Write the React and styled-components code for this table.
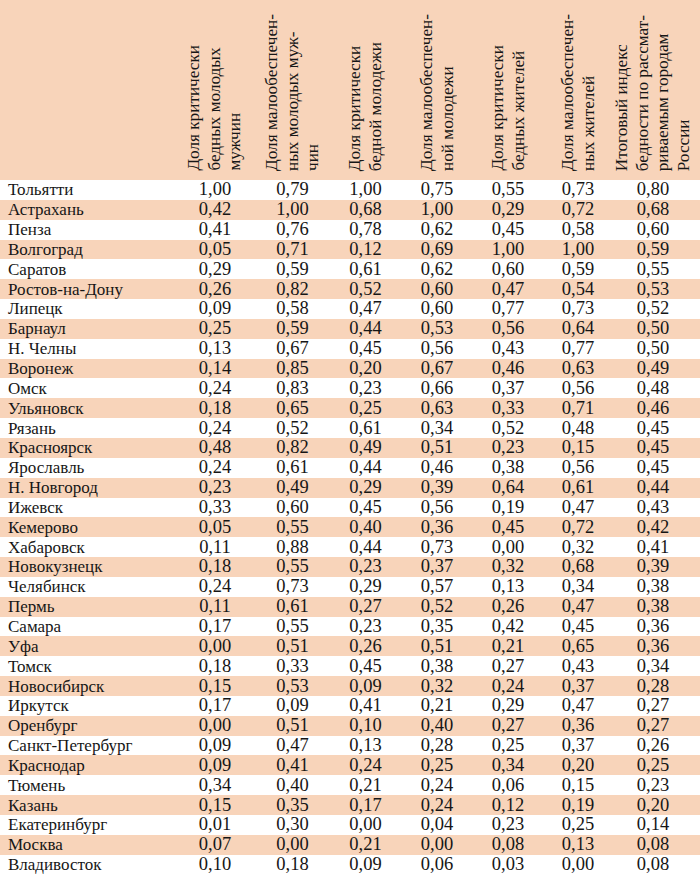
import React from 'react';
import styled, { createGlobalStyle } from 'styled-components';

const GlobalStyle = createGlobalStyle`
  body {
    margin: 0;
    background: #fff;
    font-family: 'Liberation Serif', 'Times New Roman', serif;
    color: #161616;
  }
`;

const PEACH = '#f8d4ba';
const COLS = '175px 80px 75px 71px 72px 70px 70px 80px 1fr';

const headers = [
  ['Доля критически', 'бедных молодых', 'мужчин'],
  ['Доля малообеспечен-', 'ных молодых муж-', 'чин'],
  ['Доля критически', 'бедной молодежи'],
  ['Доля малообеспечен-', 'ной молодежи'],
  ['Доля критически', 'бедных жителей'],
  ['Доля малообеспечен-', 'ных жителей'],
  ['Итоговый индекс', 'бедности по рассмат-', 'риваемым городам', 'России'],
];

const rows = [
  ['Тольятти', '1,00', '0,79', '1,00', '0,75', '0,55', '0,73', '0,80'],
  ['Астрахань', '0,42', '1,00', '0,68', '1,00', '0,29', '0,72', '0,68'],
  ['Пенза', '0,41', '0,76', '0,78', '0,62', '0,45', '0,58', '0,60'],
  ['Волгоград', '0,05', '0,71', '0,12', '0,69', '1,00', '1,00', '0,59'],
  ['Саратов', '0,29', '0,59', '0,61', '0,62', '0,60', '0,59', '0,55'],
  ['Ростов-на-Дону', '0,26', '0,82', '0,52', '0,60', '0,47', '0,54', '0,53'],
  ['Липецк', '0,09', '0,58', '0,47', '0,60', '0,77', '0,73', '0,52'],
  ['Барнаул', '0,25', '0,59', '0,44', '0,53', '0,56', '0,64', '0,50'],
  ['Н. Челны', '0,13', '0,67', '0,45', '0,56', '0,43', '0,77', '0,50'],
  ['Воронеж', '0,14', '0,85', '0,20', '0,67', '0,46', '0,63', '0,49'],
  ['Омск', '0,24', '0,83', '0,23', '0,66', '0,37', '0,56', '0,48'],
  ['Ульяновск', '0,18', '0,65', '0,25', '0,63', '0,33', '0,71', '0,46'],
  ['Рязань', '0,24', '0,52', '0,61', '0,34', '0,52', '0,48', '0,45'],
  ['Красноярск', '0,48', '0,82', '0,49', '0,51', '0,23', '0,15', '0,45'],
  ['Ярославль', '0,24', '0,61', '0,44', '0,46', '0,38', '0,56', '0,45'],
  ['Н. Новгород', '0,23', '0,49', '0,29', '0,39', '0,64', '0,61', '0,44'],
  ['Ижевск', '0,33', '0,60', '0,45', '0,56', '0,19', '0,47', '0,43'],
  ['Кемерово', '0,05', '0,55', '0,40', '0,36', '0,45', '0,72', '0,42'],
  ['Хабаровск', '0,11', '0,88', '0,44', '0,73', '0,00', '0,32', '0,41'],
  ['Новокузнецк', '0,18', '0,55', '0,23', '0,37', '0,32', '0,68', '0,39'],
  ['Челябинск', '0,24', '0,73', '0,29', '0,57', '0,13', '0,34', '0,38'],
  ['Пермь', '0,11', '0,61', '0,27', '0,52', '0,26', '0,47', '0,38'],
  ['Самара', '0,17', '0,55', '0,23', '0,35', '0,42', '0,45', '0,36'],
  ['Уфа', '0,00', '0,51', '0,26', '0,51', '0,21', '0,65', '0,36'],
  ['Томск', '0,18', '0,33', '0,45', '0,38', '0,27', '0,43', '0,34'],
  ['Новосибирск', '0,15', '0,53', '0,09', '0,32', '0,24', '0,37', '0,28'],
  ['Иркутск', '0,17', '0,09', '0,41', '0,21', '0,29', '0,47', '0,27'],
  ['Оренбург', '0,00', '0,51', '0,10', '0,40', '0,27', '0,36', '0,27'],
  ['Санкт-Петербург', '0,09', '0,47', '0,13', '0,28', '0,25', '0,37', '0,26'],
  ['Краснодар', '0,09', '0,41', '0,24', '0,25', '0,34', '0,20', '0,25'],
  ['Тюмень', '0,34', '0,40', '0,21', '0,24', '0,06', '0,15', '0,23'],
  ['Казань', '0,15', '0,35', '0,17', '0,24', '0,12', '0,19', '0,20'],
  ['Екатеринбург', '0,01', '0,30', '0,00', '0,04', '0,23', '0,25', '0,14'],
  ['Москва', '0,07', '0,00', '0,21', '0,00', '0,08', '0,13', '0,08'],
  ['Владивосток', '0,10', '0,18', '0,09', '0,06', '0,03', '0,00', '0,08'],
];

const Table = styled.div`
  width: 700px;
  font-size: 17px;
`;

const HeaderRow = styled.div`
  display: grid;
  grid-template-columns: ${COLS};
  height: 180px;
  background: ${PEACH};
`;

const HeaderCell = styled.div`
  display: flex;
  align-items: flex-end;
  justify-content: center;
  padding-bottom: 9px;
  min-width: 0;
`;

const Rotated = styled.div`
  flex-shrink: 0;
  writing-mode: vertical-rl;
  transform: rotate(180deg);
  font-size: 17.2px;
  line-height: 20.5px;
  white-space: nowrap;
`;

const Row = styled.div`
  display: grid;
  grid-template-columns: ${COLS};
  height: 19.85px;
  align-items: center;
  background: ${p => (p.$shaded ? PEACH : '#fff')};
`;

const City = styled.div`
  padding-left: 8px;
  white-space: nowrap;
  line-height: 19px;
`;

const Value = styled.div`
  text-align: center;
  font-size: 18.5px;
  line-height: 19px;
`;

export default function App() {
  return (
    <>
      <GlobalStyle />
      <Table>
        <HeaderRow>
          <HeaderCell />
          {headers.map((lines, i) => (
            <HeaderCell key={i}>
              <Rotated>
                {lines.map((l, j) => (
                  <React.Fragment key={j}>
                    {l}
                    {j < lines.length - 1 && <br />}
                  </React.Fragment>
                ))}
              </Rotated>
            </HeaderCell>
          ))}
          <HeaderCell />
        </HeaderRow>
        {rows.map((r, i) => (
          <Row key={r[0]} $shaded={i % 2 === 1}>
            <City>{r[0]}</City>
            {r.slice(1).map((v, j) => (
              <Value key={j}>{v}</Value>
            ))}
          </Row>
        ))}
      </Table>
    </>
  );
}
